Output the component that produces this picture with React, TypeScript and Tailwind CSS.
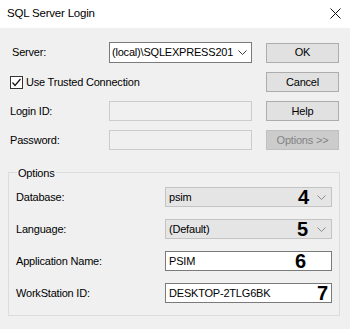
import React from "react";

const font = { fontFamily: '"Liberation Sans", Arial, sans-serif' };

const Chevron = ({ color = "#3c3c3c" }: { color?: string }) => (
  <svg width="9" height="5" viewBox="0 0 9 5" className="shrink-0">
    <polyline points="0.5,0.5 4.5,4.5 8.5,0.5" fill="none" stroke={color} strokeWidth="1" />
  </svg>
);

const Btn = ({ label, disabled }: { label: string; disabled?: boolean }) => (
  <div
    className={
      "ml-[14px] h-[20px] w-[73px] flex items-center justify-center border " +
      (disabled ? "bg-[#cccccc] border-[#bfbfbf] text-[#838383]" : "bg-[#e1e1e1] border-[#adadad] text-black")
    }
  >
    {label}
  </div>
);

const Num = ({ n, className }: { n: string; className: string }) => (
  <span
    className={"absolute top-1/2 -translate-y-1/2 text-[20px] font-bold leading-none text-black " + className}
  >
    {n}
  </span>
);

const App = () => {
  return (
    <div className="w-[350px] h-[329px] bg-[#f0f0f0] text-[11px] tracking-[-0.2px] text-black overflow-hidden" style={font}>
      {/* title bar */}
      <div className="h-[28px] bg-white flex items-center justify-between pl-[7px] pr-[9px]">
        <span className="text-[11.5px]">SQL Server Login</span>
        <svg width="11" height="11" viewBox="0 0 11 11" className="mb-[2px]">
          <path d="M0.5 0.5 L10.5 10.5 M10.5 0.5 L0.5 10.5" stroke="#111" strokeWidth="1" />
        </svg>
      </div>

      <div className="px-[10px] pt-[14px]">
        <div className="grid grid-cols-[99px_143px_87px] items-center">
          {/* server row */}
          <span className="ml-[2px]">Server:</span>
          <div className="h-[21px] bg-white border border-[#7a7a7a] flex items-center pl-[2px] pr-[4px] gap-[2px]">
            <span className="flex-1 whitespace-nowrap">(local)\SQLEXPRESS201</span>
            <Chevron />
          </div>
          <Btn label="OK" />
        </div>

        <div className="grid grid-cols-[242px_87px] items-center mt-[9px]">
          <label className="flex items-center gap-[3px] h-[20px]">
            <span className="w-[13px] h-[13px] border border-[#333] bg-white flex items-center justify-center">
              <svg width="11" height="11" viewBox="0 0 11 11">
                <polyline points="1.5,5.5 4,8.5 9.5,2" fill="none" stroke="#111" strokeWidth="1.2" />
              </svg>
            </span>
            <span>Use Trusted Connection</span>
          </label>
          <Btn label="Cancel" />
        </div>

        <div className="grid grid-cols-[99px_143px_87px] gap-y-[9px] items-center mt-[9px]">
          <span>Login ID:</span>
          <div className="h-[20px] border border-[#cccccc] bg-[#f0f0f0]" />
          <Btn label="Help" />
          <span>Password:</span>
          <div className="h-[20px] border border-[#cccccc] bg-[#f0f0f0]" />
          <Btn label="Options >>" disabled />
        </div>
      </div>

      {/* options group */}
      <div className="relative mt-[22px] ml-[8px] w-[332px] h-[144px] border border-[#dcdcdc] pt-[14px] pl-[7px] pr-[7px]">
        <span className="absolute -top-[8px] left-[8px] bg-[#f0f0f0] px-[1px]">Options</span>
        <div className="grid grid-cols-[149px_167px] gap-y-[12px] items-center">
          <span>Database:</span>
          <div className="relative h-[20px] bg-[#e5e5e5] border border-[#c4c4c4] flex items-center pl-[3px] pr-[5px]">
            <span className="flex-1">psim</span>
            <Chevron color="#8a8a8a" />
            <Num n="4" className="left-[132px]" />
          </div>

          <span>Language:</span>
          <div className="relative h-[20px] bg-[#e5e5e5] border border-[#c4c4c4] flex items-center pl-[3px] pr-[5px]">
            <span className="flex-1">(Default)</span>
            <Chevron color="#8a8a8a" />
            <Num n="5" className="left-[131px]" />
          </div>

          <span>Application Name:</span>
          <div className="relative h-[20px] bg-white border border-[#7a7a7a] flex items-center pl-[3px]">
            <span>PSIM</span>
            <Num n="6" className="left-[129px]" />
          </div>

          <span>WorkStation ID:</span>
          <div className="relative h-[20px] bg-white border border-[#7a7a7a] flex items-center pl-[3px]">
            <span>DESKTOP-2TLG6BK</span>
            <Num n="7" className="left-[151px]" />
          </div>
        </div>
      </div>
    </div>
  );
};

export default App;
